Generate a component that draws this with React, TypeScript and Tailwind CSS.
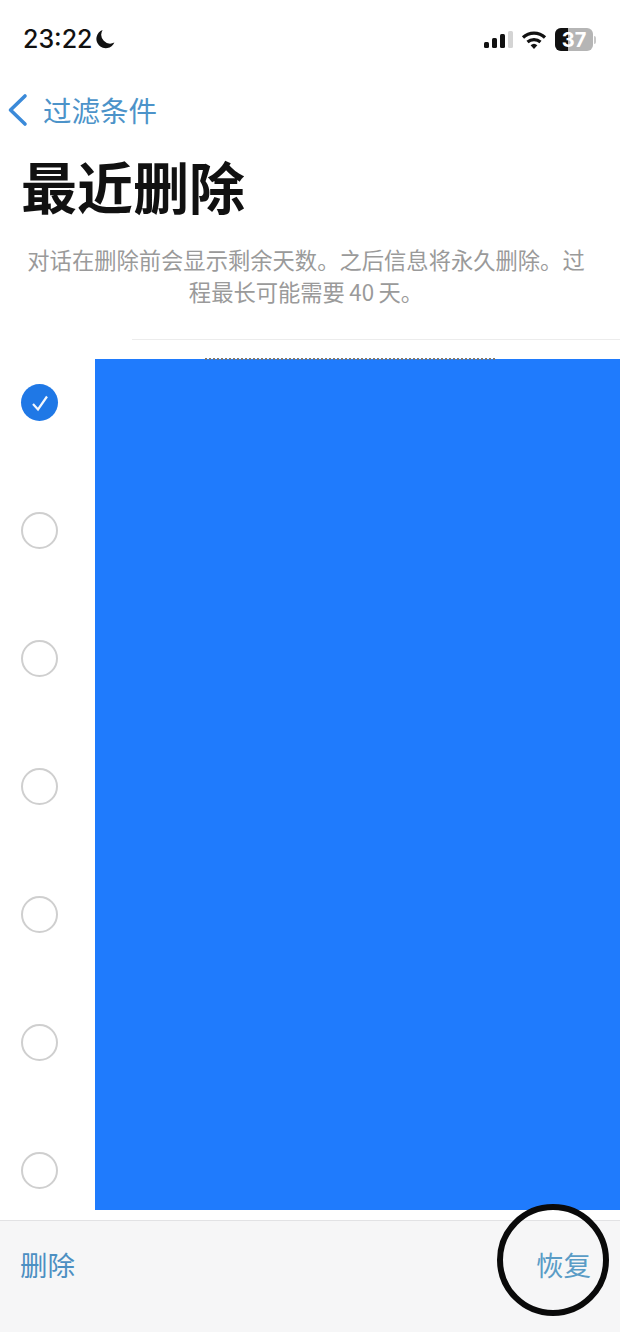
import React from 'react';

const cjk = "font-['Noto_Sans_CJK_SC','Liberation_Sans',sans-serif]";
const notice = '对话在删除前会显示剩余天数。之后信息将永久删除。过程最长可能需要\u200940\u2009天。';

function StatusBar() {
  return (
    <div className="flex h-[78px] items-start justify-between pl-[23px] pr-[24px] pt-[24px]">
      <div className="flex items-center gap-[3px]">
        <span className="font-['Inter',sans-serif] text-[25px] leading-[30px] font-medium text-[#111]">23:22</span>
        <svg width="20" height="20" viewBox="0 0 20 20">
          <path d="M7.6 1 A9.4 9.4 0 1 0 19.4 13.6 A9 9 0 0 1 7.6 1 Z" fill="#111" />
        </svg>
      </div>
      <div className="flex items-center gap-[8px] pt-[4px]">
        <svg className="-mr-px" width="30" height="20" viewBox="0 0 30 20">
          <rect x="0" y="12" width="5" height="6" rx="1.5" fill="#111" />
          <rect x="8" y="8" width="5" height="10" rx="1.5" fill="#111" />
          <rect x="16" y="4" width="5" height="14" rx="1.5" fill="#111" />
          <rect x="24" y="1" width="5" height="17" rx="1.5" fill="#d4d4d4" />
        </svg>
        <svg width="26" height="20" viewBox="0 0 26 20" fill="none" stroke="#111" strokeWidth="3.2">
          <path d="M2 7.5 A16 16 0 0 1 24 7.5" />
          <path d="M6.5 12 A10 10 0 0 1 19.5 12" />
          <path d="M13 19 L9.6 15.3 A5 5 0 0 1 16.4 15.3 Z" fill="#111" stroke="none" />
        </svg>
        <div className="flex items-center gap-[1px]">
          <div className="relative flex h-[23px] w-[38px] items-center justify-center overflow-hidden rounded-[6px] bg-[#b5b5b5]">
            <div className="absolute inset-y-0 left-0 w-[13px] bg-[#111]" />
            <span className="relative font-['Inter',sans-serif] text-[20px] leading-none font-bold text-white">37</span>
          </div>
          <div className="h-[8px] w-[2px] rounded-r-full bg-[#c8c8c8]" />
        </div>
      </div>
    </div>
  );
}

function SelectCircle({ checked }: { checked?: boolean }) {
  if (checked) {
    return (
      <div className="flex h-[37px] w-[37px] items-center justify-center rounded-full bg-[#1f78e6]">
        <svg width="24" height="24" viewBox="0 0 24 24" fill="none" stroke="#f2f7fd" strokeWidth="2.2">
          <path d="M5 13 L10 18.5 L19 5.5" />
        </svg>
      </div>
    );
  }
  return <div className="h-[37px] w-[37px] rounded-full border-[2.5px] border-[#cfcfcf]" />;
}

export default function App() {
  const rows = [true, false, false, false, false, false, false];

  return (
    <div className={`relative flex h-[1332px] w-[620px] flex-col overflow-hidden bg-white ${cjk}`}>
      <StatusBar />

      <div className="flex h-[64px] items-center pl-[7px] pb-[1px]">
        <svg width="22" height="34" viewBox="0 0 22 34" fill="none" stroke="#3b8ad9" strokeWidth="3.6" strokeLinecap="round" strokeLinejoin="round">
          <path d="M18 3 L3.5 17 L18 31" />
        </svg>
        <span className="ml-[14px] text-[28.5px] leading-[40px] text-[#4c93c9]">过滤条件</span>
      </div>

      <h1 className="mt-[3px] pl-[21px] text-[56px] leading-[80px] font-bold text-[#111]">最近删除</h1>

      <p className="mt-[18px] pl-[22px] pr-[30px] text-center text-[22.3px] leading-[32px] text-[#9a9a9a]">
        {notice}
      </p>

      <div className="mt-[32px] ml-[132px] h-px bg-[#ececec]" />

      <div className="mt-[19px] flex h-[851px]">
        <div className="flex w-[95px] flex-col gap-[91px] pl-[21px] pt-[25px]">
          {rows.map((checked, i) => (
            <SelectCircle key={i} checked={checked} />
          ))}
        </div>
        <div className="flex-1 bg-[#1f7bfd]">
          <div className="-mt-px ml-[110px] w-[290px] border-t-2 border-dotted border-[#777]" />
        </div>
      </div>

      <div className="mt-[10px] flex flex-1 items-start justify-between border-t-[1.5px] border-[#e2e2e4] bg-[#f6f6f7] pl-[20px] pr-[29px] pt-[23px]">
        <span className="text-[27.5px] leading-[40px] text-[#4c8fc2]">删除</span>
        <span className="text-[27.5px] leading-[40px] text-[#5a9cc6]">恢复</span>
      </div>

      <div className="absolute left-[497px] top-[1204px] h-[112px] w-[112px] rounded-full border-[6.5px] border-[#0a0a0a]" />
    </div>
  );
}
